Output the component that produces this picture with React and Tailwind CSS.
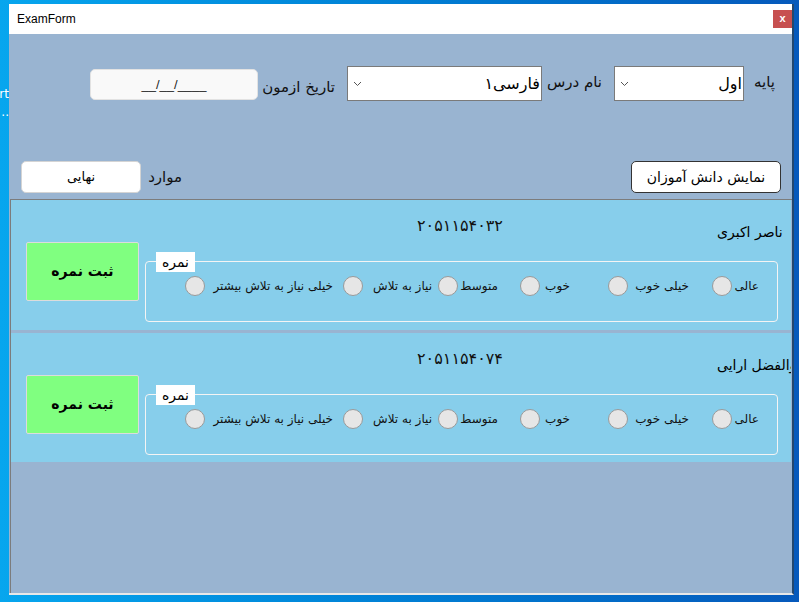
import React from 'react'

const RADIOS = [
  { t: 'عالی', w: 'w-[47px]', m: '' },
  { t: 'خیلی خوب', w: 'w-[81px]', m: 'mr-[23px]' },
  { t: 'خوب', w: 'w-[50px]', m: 'mr-[38px]' },
  { t: 'متوسط', w: 'w-[60px]', m: 'mr-[22px]' },
  { t: 'نیاز به تلاش', w: 'w-[89px]', m: 'mr-[6px]' },
  { t: 'خیلی نیاز به تلاش بیشتر', w: 'w-[148px]', m: 'mr-[10px]' },
]

const STUDENTS = [
  { name: 'ناصر اکبری', code: '۲۰۵۱۱۵۴۰۳۲', h: 'h-[130px]' },
  { name: 'ابوالفضل ارایی', code: '۲۰۵۱۱۵۴۰۷۴', h: 'h-[129px]' },
]

function Chevron() {
  return (
    <svg width="9" height="6" viewBox="0 0 9 6" className="shrink-0">
      <polyline points="1,1 4.5,4.5 8,1" fill="none" stroke="#555" strokeWidth="1" />
    </svg>
  )
}

function Combo({ value, w }) {
  return (
    <div className={`${w} h-[35px] bg-white border border-[#7a7a7a] flex items-center justify-between pl-[5px] pr-[1px]`}>
      <Chevron />
      <span dir="rtl" className="text-[16px] text-black leading-none">{value}</span>
    </div>
  )
}

function StudentCard({ s }) {
  return (
    <div className={`flex ${s.h} w-[780px] bg-[#87ceeb]`}>
      <div className="w-[134px] pl-[15px] pt-[42px]">
        <button className="w-[113px] h-[59px] bg-[#80ff80] border border-[#dcdcdc] rounded-[2px] text-[14px] font-bold text-black">
          ثبت نمره
        </button>
      </div>
      <div className="flex flex-col w-[646px]">
        <div className="flex h-[61px]">
          <div className="ml-[272px] w-[88px] pt-[14px] text-[16px] text-[#111] whitespace-nowrap">{s.code}</div>
          <div className="ml-[212px] w-[74px] pt-[20px] overflow-hidden">
            <span dir="rtl" className="inline-block whitespace-nowrap text-[14px] tracking-[-0.4px] text-black">{s.name}</span>
          </div>
        </div>
        <div className="relative w-[633px] h-[61px] border border-[#f4f4f4] rounded-[4px]">
          <div className="absolute left-[10px] top-[-10px] w-[39px] h-[20px] bg-white flex items-center justify-center text-[14px] text-black">
            نمره
          </div>
          <div dir="rtl" className="flex pt-[14px] pr-[18px]">
            {RADIOS.map(r => (
              <label key={r.t} className={`flex items-center justify-between ${r.w} ${r.m}`}>
                <span className="text-[12px] text-[#111] whitespace-nowrap">{r.t}</span>
                <span className="w-[20px] h-[20px] rounded-full bg-[#e6e6e6] border border-[#9a9a9a] shrink-0" />
              </label>
            ))}
          </div>
        </div>
      </div>
    </div>
  )
}

export default function App() {
  return (
    <div className="w-[799px] h-[602px] overflow-hidden bg-gradient-to-r from-[#07a6ee] to-[#0659bb] pt-[4px] pl-[9px] flex font-['DejaVu_Sans',sans-serif]">
      {/* desktop icon label peeking out */}
      <div className="absolute left-0 top-[88px] w-[9px] overflow-hidden text-[12px] text-white leading-none flex justify-end">
        <span className="whitespace-nowrap">rt</span>
      </div>
      <div className="absolute left-0 top-[106px] w-[9px] overflow-hidden text-[12px] text-white leading-none flex justify-end">
        <span className="whitespace-nowrap">..</span>
      </div>

      <div className="flex flex-col w-[785px] h-[591px] border-r-2 border-r-[#24486e] border-b-2 border-b-[#e8e8e8]">
        {/* title bar */}
        <div className="h-[30px] bg-white flex items-center justify-between pl-[8px]">
          <span className="font-['Liberation_Sans',sans-serif] text-[12px] text-black">ExamForm</span>
          <div className="w-[19px] h-[18px] bg-[#c75050] flex items-center justify-center text-white text-[11px] font-bold font-['Liberation_Sans',sans-serif] leading-none pb-[2px]">
            x
          </div>
        </div>

        <div className="flex-1 bg-[#99b4d1] flex flex-col">
          {/* row 1 */}
          <div className="flex mt-[32px] h-[35px]">
            <div className="ml-[81px] mt-[3px] w-[168px] h-[31px] bg-[#f9f9f9] border border-[#e2e2e2] rounded-[5px] flex items-center justify-center text-[13px] text-[#222] font-['Liberation_Sans',sans-serif]">
              <span>__</span><span>/</span><span>__</span><span>/</span><span>____</span>
            </div>
            <div dir="rtl" className="ml-[10px] w-[67px] pt-[10px] text-[15px] text-[#111] whitespace-nowrap">تاریخ ازمون</div>
            <div className="ml-[12px]"><Combo value="فارسی۱" w="w-[195px]" /></div>
            <div dir="rtl" className="ml-[11px] w-[49px] pt-[5px] text-[15px] text-[#111] whitespace-nowrap">نام درس</div>
            <div className="ml-[12px]"><Combo value="اول" w="w-[130px]" /></div>
            <div dir="rtl" className="ml-[4px] w-[27px] pt-[5px] text-[15px] text-[#111] whitespace-nowrap">پایه</div>
          </div>

          {/* row 2 */}
          <div className="flex items-center mt-[60px] h-[32px]">
            <button className="ml-[12px] w-[120px] h-[32px] bg-white border border-[#d4d4d4] rounded-[5px] text-[13px] text-black">
              نهایی
            </button>
            <div dir="rtl" className="ml-[11px] w-[30px] text-[15px] text-[#111] whitespace-nowrap">موارد</div>
            <div className="flex-1" />
            <button className="mr-[11px] w-[150px] h-[32px] bg-white border border-[#333] rounded-[5px] text-[14px] text-black">
              نمایش دانش آموزان
            </button>
          </div>

          {/* students panel */}
          <div className="flex-1 mt-[6px] ml-[1px] border-l border-t border-[#7c7c7c] flex flex-col gap-[3px]">
            {STUDENTS.map(s => <StudentCard key={s.code} s={s} />)}
          </div>
        </div>
      </div>
    </div>
  )
}
